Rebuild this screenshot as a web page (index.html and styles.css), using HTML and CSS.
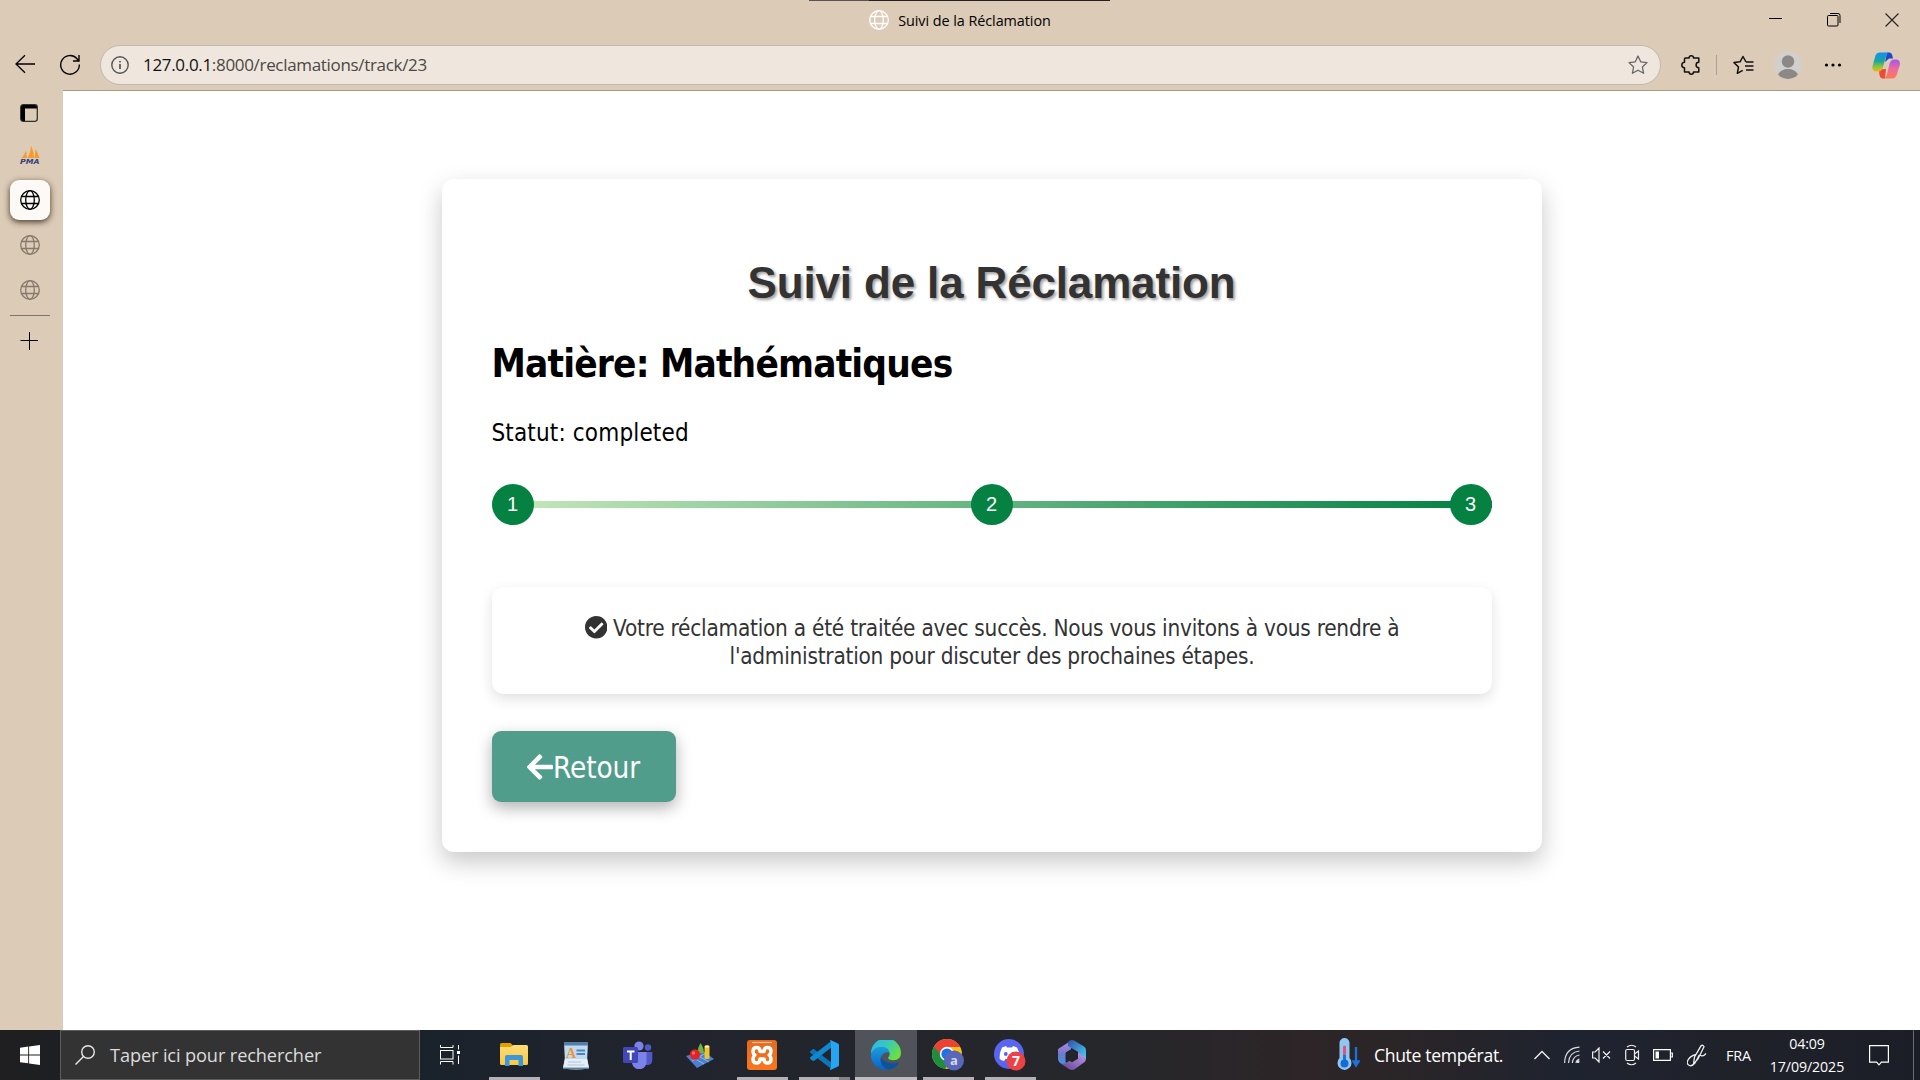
FILE: index.html
```html
<!DOCTYPE html>
<html lang="fr">
<head>
<meta charset="utf-8">
<title>Suivi de la Réclamation</title>
<link rel="stylesheet" href="styles.css">
</head>
<body>
<svg width="0" height="0" class="defs" aria-hidden="true">
  <defs>
    <symbol id="globe" viewBox="0 0 20 20"><g fill="none" stroke="currentColor" stroke-width="1.3"><circle cx="10" cy="10" r="9.3"/><ellipse cx="10" cy="10" rx="4.3" ry="9.3"/><path d="M1.4 6.5h17.2M1.4 13.5h17.2"/></g></symbol>
    <linearGradient id="edgeA" x1="0" y1="0" x2="1" y2=".6"><stop offset="0" stop-color="#2fb5e8"/><stop offset=".5" stop-color="#36c8c0"/><stop offset="1" stop-color="#6be03e"/></linearGradient>
    <linearGradient id="edgeB" x1="0" y1="0" x2="0" y2="1"><stop offset="0" stop-color="#1b9de0"/><stop offset="1" stop-color="#0b63c4"/></linearGradient>
    <linearGradient id="copA" x1="0" y1="0" x2="0" y2="1"><stop offset="0" stop-color="#1290f0"/><stop offset=".45" stop-color="#1aa5a0"/><stop offset=".75" stop-color="#8cc63a"/><stop offset="1" stop-color="#f4b51c"/></linearGradient>
    <linearGradient id="copB" x1="0" y1="0" x2="0" y2="1"><stop offset="0" stop-color="#a455ee"/><stop offset=".5" stop-color="#f06a9c"/><stop offset="1" stop-color="#fa7a50"/></linearGradient>
    <linearGradient id="mA" x1="0" y1="0" x2="1" y2="1"><stop offset="0" stop-color="#3350a8"/><stop offset="1" stop-color="#48d0f5"/></linearGradient>
    <linearGradient id="mB" x1="0" y1="0" x2="0" y2="1"><stop offset="0" stop-color="#b78ae0"/><stop offset=".5" stop-color="#6f78d0"/><stop offset="1" stop-color="#2aa4e8"/></linearGradient>
    <linearGradient id="mC" x1="0" y1="1" x2="1" y2="0"><stop offset="0" stop-color="#5c3f8c"/><stop offset="1" stop-color="#c59af0"/></linearGradient>
    <linearGradient id="xa" x1="0" y1="0" x2="0" y2="1"><stop offset="0" stop-color="#e36a20"/><stop offset="1" stop-color="#f9761d"/></linearGradient>
    <linearGradient id="fold" x1="0" y1="0" x2="0" y2="1"><stop offset="0" stop-color="#ffdc78"/><stop offset="1" stop-color="#fbc83f"/></linearGradient>
  </defs>
</svg>

<header class="titlebar">
  <span class="top-strip"></span>
  <div class="tab-title"><svg class="i20"><use href="#globe"/></svg><span>Suivi de la Réclamation</span></div>
  <div class="win-controls">
    <svg width="14" height="14" viewBox="0 0 14 14"><path d="M0 5.5h13" stroke="#000"/></svg>
    <svg width="14" height="14" viewBox="0 0 14 14" fill="none" stroke="#000"><rect x=".5" y="2.500" width="10.500" height="10.500" rx="1"/><path d="M3 .5h8a2 2 0 0 1 2 2V10"/></svg>
    <svg width="14" height="14" viewBox="0 0 14 14"><path d="M.5.5l13 13M13.500.5l-13 13" stroke="#222" stroke-width="1.100"/></svg>
  </div>
</header>

<nav class="toolbar">
  <svg class="back" width="20" height="20" viewBox="0 0 20 20" fill="none" stroke="#000" stroke-width="1.300"><path d="M20 10H1M10 1.200L1 10l9 8.800"/></svg>
  <svg class="reload" width="22" height="22" viewBox="0 0 22 22" fill="none" stroke="#000" stroke-width="1.400"><path d="M20.300 10.500A9.300 9.300 0 1 1 17.800 4.500L19.500 6.500M20 1v6h-6"/></svg>
  <div class="address">
    <svg class="info" width="18" height="18" viewBox="0 0 18 18" fill="none" stroke="#555" stroke-width="1.400"><circle cx="9" cy="9" r="8.200"/><path d="M9 8v5M9 5v1.600" stroke-width="1.700"/></svg>
    <span class="url"><b>127.0.0.1</b>:8000/reclamations/track/23</span>
    <svg class="star" width="20" height="20" viewBox="0 0 20 20" fill="none" stroke="#666" stroke-width="1.300" stroke-linejoin="round"><path d="M10 1l2.700 5.800 6.300.8-4.600 4.400 1.200 6.300L10 15.200l-5.600 3.100L5.600 12 1 7.600l6.300-.8z"/></svg>
  </div>
  <div class="tools">
    <svg class="puzzle" width="20" height="20" viewBox="0 0 20 20" fill="none" stroke="#111" stroke-width="1.500" stroke-linejoin="round"><path d="M4.500 3h3.600a2.200 2.200 0 0 1 4.400 0h5.300v4.300a2.400 2.400 0 0 0 0 5.400V17h-5.300a2.200 2.200 0 0 1-4.400 0H3.500v-4.300a2.500 2.500 0 0 1 0-5.400V4q0-1 1-1z"/></svg>
    <span class="sep"></span>
    <svg class="favs" width="21" height="20" viewBox="0 0 21 20" fill="none" stroke="#111" stroke-width="1.500" stroke-linejoin="round"><path d="M13 7L10 1.500 7 6.800 1 7.600l4.500 4.400-1.200 6.300 5.400-3M13 7h7.500M12 11h8.500M13 15h7.500"/></svg>
    <svg class="avatar" width="28" height="28" viewBox="0 0 28 28"><circle cx="14" cy="14" r="13.800" fill="#d2d0cd"/><circle cx="14" cy="10.500" r="6.200" fill="#8b8885"/><path d="M4 23.500q3-5.500 10-5.500t10 5.500a13.500 13.500 0 0 1-20 0z" fill="#8b8885"/></svg>
    <svg class="more" width="18" height="6" viewBox="0 0 18 6"><circle cx="2.500" cy="3" r="1.600"/><circle cx="9" cy="3" r="1.600"/><circle cx="15.500" cy="3" r="1.600"/></svg>
    <svg class="copilot" width="28" height="27" viewBox="0 0 28 27"><path d="M15 .5h2.500q2 .2 2.700 2.500L21 6.500h-4L13 10z" fill="#1f49c8"/><path d="M7.500.5H17q-2 .7-3 4L11 15q-1.300 4.500-5 4.500H3.500Q-.2 19 .5 14L3.500 3.500Q4.500.7 7.500.5z" fill="url(#copA)"/><path d="M13 26.500h-2.500Q8.200 26 7.600 23.500L7 19.500q2-.3 3.500-2.500L14 17z" fill="#ee4a38"/><path d="M20.500 26.500H12q2-.7 3-4L17.500 12q1.300-4.500 4.500-4.500h2.500q4 .5 3.300 5.500L24.500 23.500q-1 2.800-4 3z" fill="url(#copB)"/></svg>
  </div>
</nav>

<main class="workspace">
  <aside class="side">
    <div class="side-item"><svg width="18" height="18" viewBox="0 0 18 18"><rect x=".7" y=".7" width="16.600" height="16.600" rx="2.500" fill="none" stroke="#333" stroke-width="1.300"/><path d="M1 3.200q0-2.200 2.200-2.200h11.600Q17 1 17 3.200V4.500H5v12.500H3.200Q1 17 1 14.800z"/></svg></div>
    <div class="side-item pma"><svg width="22" height="20" viewBox="0 0 22 20"><path d="M2.500 13Q5.500 10 7 5.500L8 13zM8.500 13Q11.500 8 12 .5q3 6 3 12.500zM15.500 13q1-4 .8-9 3 4 4.200 9z" fill="#f79a2c"/><text x="1" y="19" textLength="19.500" lengthAdjust="spacingAndGlyphs" class="pma-text">PMA</text></svg></div>
    <div class="side-item"><span class="active-tab"><svg class="i20"><use href="#globe"/></svg></span></div>
    <div class="side-item dim"><svg class="i20"><use href="#globe"/></svg></div>
    <div class="side-item dim"><svg class="i20"><use href="#globe"/></svg></div>
    <hr class="side-line">
    <div class="side-item plus"><svg width="18" height="18" viewBox="0 0 18 18"><path d="M9.500 0v18M.5 8.500h18" stroke="#000"/></svg></div>
  </aside>

  <section class="page">
    <article class="card">
      <h1>Suivi de la Réclamation</h1>
      <h2>Matière: Mathématiques</h2>
      <p class="status">Statut: completed</p>
      <div class="steps"><span class="step">1</span><span class="step">2</span><span class="step">3</span></div>
      <div class="message"><svg class="check" viewBox="8 8 496 496"><path fill="currentColor" d="M504 256c0 136.967-111.033 248-248 248S8 392.967 8 256 119.033 8 256 8s248 111.033 248 248zM227.314 387.314l184-184c6.248-6.248 6.248-16.379 0-22.627l-22.627-22.627c-6.248-6.249-16.379-6.249-22.628 0L216 308.118l-70.059-70.059c-6.248-6.248-16.379-6.248-22.628 0l-22.627 22.627c-6.248 6.248-6.248 16.379 0 22.627l104 104c6.249 6.249 16.379 6.249 22.628.001z"/></svg> Votre réclamation a été traitée avec succès. Nous vous invitons à vous rendre à <br>l'administration pour discuter des prochaines étapes.</div>
      <a class="button"><svg width="26" height="30" viewBox="0 0 448 512"><path fill="#fff" d="M257.500 445.100l-22.200 22.200c-9.400 9.400-24.600 9.400-33.900 0L7 273c-9.400-9.400-9.400-24.600 0-33.900L201.400 44.700c9.400-9.400 24.600-9.400 33.900 0l22.200 22.200c9.500 9.500 9.300 25-.4 34.300L136.600 216H424c13.300 0 24 10.700 24 24v32c0 13.300-10.700 24-24 24H136.600l120.500 114.800c9.800 9.300 10 24.800.4 34.300z"/></svg><span>Retour</span></a>
    </article>
  </section>
</main>

<footer class="taskbar">
  <div class="start"><svg width="20" height="20" viewBox="0 0 20 20" fill="#fff"><path d="M0 2.700L8.200 1.600V9.400H0zM9.100 1.500L20 0v9.400H9.100zM0 10.400h8.200v7.900L0 17.200zM9.100 10.400H20V20L9.100 18.500z"/></svg></div>
  <div class="search"><svg width="20" height="20" viewBox="0 0 20 20" fill="none" stroke="#e8e8e8" stroke-width="1.400"><circle cx="13" cy="7" r="6.300"/><path d="M8.500 11.500L.5 19.500"/></svg><span>Taper ici pour rechercher</span></div>
  <div class="task-view"><svg width="20" height="20" viewBox="0 0 20 20" fill="none" stroke="#fff"><rect x=".5" y="5.500" width="12.500" height="8.500"/><path d="M.5 0v2.500H13V0M.5 19.500V16.500H13v3M18.500 0v4.500M18.500 10.500v8.500"/><path d="M17 7.500h3" stroke-width="3"/></svg></div>
  <div class="apps">
    <div class="app open"><svg width="28" height="24" viewBox="0 0 28 24"><path d="M0 1.500Q0 0 1.500 0h9L13 2.500V8H0z" fill="#e0a000"/><path d="M0 4h10.500l3-2H26.500Q28 2 28 3.500v17Q28 22 26.500 22h-25Q0 22 0 20.500z" fill="url(#fold)"/><path d="M5 14q0-2 2-2h14q2 0 2 2v9h-4.500v-6H9.500v6H5z" fill="#3a96dd"/></svg></div>
    <div class="app"><svg width="26" height="29" viewBox="0 0 26 29"><path d="M1 2h24l-.8 15L26 27H0l1.800-10z" fill="#bfdcef"/><path d="M1 1h24v3.500H1z" fill="#567fa5"/><path d="M2 18h22l2 9.500q-13 2-26 0z" fill="#e5eff7"/><text x="3" y="17" class="wordpad-a">A</text><path d="M13.500 9.500H22M13.500 13H22" stroke="#4b85c8" stroke-width="1.800"/><path d="M5 21h13M4.500 24h17" stroke="#b3c5d3"/><path d="M0 27.300h26" stroke="#5a829f" stroke-width="1.500"/></svg></div>
    <div class="app"><svg width="30" height="28" viewBox="0 0 30 28"><circle cx="25" cy="6.500" r="3.200" fill="#5059c9"/><path d="M20 11h9.300v8q0 5-5 5H20z" fill="#5059c9"/><circle cx="16" cy="5" r="4.600" fill="#7b83eb"/><path d="M9 11h14.500v9a7.300 7.300 0 0 1-14.500 2z" fill="#7b83eb"/><rect y="6" width="15" height="16" rx="1.500" fill="#4148b5"/><path d="M4 10.500h7.500M7.700 10.500V19" stroke="#fff" stroke-width="2"/></svg></div>
    <div class="app"><svg width="28" height="26" viewBox="0 0 28 26"><path d="M0 14L17 9l11 8-17 9z" fill="#4c80ce"/><path d="M4 14l14 8M9 12l14 8M6 19l14-8" stroke="#9dc3f0" stroke-width=".8"/><path d="M14.500 1q4 6 3 10h-6q0-5 3-10z" fill="#6cb840"/><circle cx="9" cy="12.500" r="5.200" fill="#de2626"/><circle cx="7.500" cy="11" r="1.700" fill="#f46a60"/><rect x="18.500" y="4" width="5" height="13" rx="1.500" fill="#edc32f"/><ellipse cx="21" cy="4.500" rx="2.500" ry="1.200" fill="#fff09c"/></svg></div>
    <div class="app open"><svg width="30" height="30" viewBox="0 0 30 30"><rect width="30" height="30" rx="3" fill="url(#xa)"/><path d="M5 2.500h20" stroke="#ffc392" stroke-width="1.200"/><path d="M15 11.500h-2Q13 7.500 9.500 7.500T6 11.500q0 2.500 1.800 3.500Q6 16.500 6 19q0 4 3.500 4t3.500-4h4q0 4 3.500 4t3.500-4q0-2.500-1.800-4 1.800-1 1.800-3.500 0-4-3.500-4T17 11.500z" fill="none" stroke="#fff" stroke-width="3.500" stroke-linejoin="round"/></svg></div>
    <div class="app open vscode"><svg width="30" height="30" viewBox="0 0 30 30"><path d="M1 11.500L3.500 9.300q1-.6 2 .2L23 23v6.500L1 12.500z" fill="#0c74b8"/><path d="M1 18.500l2.500 2.200q1 .6 2-.2L23 7V.5L1 17.500z" fill="#1187ce"/><path d="M22 .3L29 3.400q1 .5 1 1.600v20q0 1.200-1 1.600l-7 3.100q-1 .2-1.200-.5l1.200-1.700V2.200L20.800.6z" fill="#27a4f2"/></svg></div>
    <div class="app open active"><svg width="30" height="30" viewBox="0 0 30 30"><path d="M0 13.500A15 15 0 0 1 30 13q0 7-7.500 7.200Q18 20.300 17 18q2-2 1.500-5Q17 8 11 8 4 8 0 13.500z" fill="url(#edgeA)"/><path d="M0 14Q3 6.500 10.500 6.700 18 7 18.700 13q-1.500-1-4-.5Q10 14 9.500 19.500 9.500 26 17 29.900 7 31 2 22.500-.5 18 0 14z" fill="url(#edgeB)"/><path d="M10 17Q8 26 17 29.800q7-.8 10.800-6.800.3-1.200-1-.8-5.800 2.500-11.500-.2Q11.500 20 10 17z" fill="#0c539e"/></svg></div>
    <div class="app open"><svg width="32" height="32" viewBox="0 0 32 32"><circle cx="15" cy="15" r="15" fill="#fbc116"/><path d="M15 15L2 7.500A15 15 0 0 0 13 29.900L20 19z" fill="#1e8e3e"/><path d="M2 7.500A15 15 0 0 1 28.200 8H15L9 16z" fill="#ea4335"/><circle cx="15" cy="15" r="7.200" fill="#fff"/><circle cx="15" cy="15" r="5.600" fill="#1a73e8"/><circle cx="22" cy="21.500" r="10" fill="#5867b8"/><text x="22" y="26" text-anchor="middle" class="badge-a">a</text></svg></div>
    <div class="app open"><svg width="32" height="32" viewBox="0 0 32 32"><circle cx="15" cy="15" r="15" fill="#5865f2"/><path d="M8 8.500l4-1.500 1 1.500h5L19 7l4 1.500q3 5 2.800 11Q24 21.500 21 22l-1.500-2h-8L10 22q-3-.5-4.500-2.500Q5.500 13 8 8.500z" fill="#fff"/><circle cx="11.800" cy="15" r="1.900" fill="#5865f2"/><circle cx="19" cy="15" r="1.900" fill="#5865f2"/><circle cx="22" cy="22" r="9.500" fill="#ed4245"/><text x="22" y="27" text-anchor="middle" class="badge-7">7</text></svg></div>
    <div class="app"><svg width="28" height="30" viewBox="0 0 28 30"><path d="M0 9L13 .8v9L7.500 13v9L12 28 2 23Q0 21 0 19z" fill="url(#mB)"/><path d="M11 1q3-2 6 0l9 5.500q2 1 2 3.500v9l-7.500-5-.3-2L10 6V2z" fill="url(#mA)"/><path d="M28 18.500q0 3-2 4l-9 6.500q-3 1.800-6 0l-8.500-5.500q4 .8 7-1.500L20 16v-4z" fill="url(#mC)"/><path d="M14 8.800l6 3.500v6.400l-6 3.500-6-3.500v-6.400z" fill="#22252b"/></svg></div>
  </div>
  <div class="weather"><svg width="24" height="34" viewBox="0 0 24 34"><path d="M3.500 5a5 5 0 0 1 10 0v15a7 7 0 1 1-10 0z" fill="#8fc7f2"/><path d="M8.500 9v16" stroke="#dc5578" stroke-width="3" stroke-linecap="round"/><path d="M8.500 17v8" stroke="#1f70d8" stroke-width="3"/><circle cx="8.500" cy="25.500" r="4" fill="#146ad8"/><path d="M20 9v18M17.500 23.500L20 27.500 22.500 23.500z" fill="#1c72dc" stroke="#1c72dc" stroke-width="2.300"/></svg><span>Chute températ.</span></div>
  <div class="tray">
    <span class="t-chevron"><svg width="16" height="10" viewBox="0 0 16 10" fill="none" stroke="#eee" stroke-width="1.400"><path d="M.5 9L8 1.500 15.500 9"/></svg></span>
    <span class="t-wifi"><svg width="16" height="18" viewBox="0 0 16 18" fill="none" stroke="#ddd" stroke-width="1.200"><path d="M.6 17Q1 2 15.500 1.200M4.500 17Q5 6 15.500 5M8.300 17Q9 10 15.500 9M12 17q.3-3 3.500-4"/><circle cx="14" cy="15.500" r="1" fill="#fff"/></svg></span>
    <span class="t-sound"><svg width="19" height="16" viewBox="0 0 19 16" fill="none" stroke="#eee" stroke-width="1.200"><path d="M.6 5h2.600L7 1v14l-3.800-4H.6zM11 4.500l7 7M18 4.500l-7 7"/></svg></span>
    <span class="t-cam"><svg width="15" height="22" viewBox="0 0 15 22" fill="none" stroke="#eee" stroke-width="1.200"><rect x=".7" y="5.500" width="8.800" height="11" rx="1.500"/><path d="M9.500 10l4-3v8l-4-3M2 3q4.500-3.500 9 0M2 19q4.500 3.500 9 0"/></svg></span>
    <span class="t-battery"><svg width="20" height="12" viewBox="0 0 20 12"><path d="M.6.6h16.800v10.800H.6zM17.500 4H19.300v4h-1.800" fill="none" stroke="#fff" stroke-width="1.200"/><path d="M2.500 2.500H6v7H2.500z" fill="#fff"/></svg></span>
    <span class="t-pen"><svg width="20" height="23" viewBox="0 0 20 23" fill="none" stroke="#eee" stroke-width="1.300"><path d="M6.500 20L7.500 13 14 1.800q2-1.500 3 1L11 15 6.500 20zM9 10.500Q3 12 1 16T2.500 21.500Q5 22.500 8 19L11 13.500Q12 10 14 11.500t5-2"/></svg></span>
    <span class="t-lang">FRA</span>
    <time class="t-clock"><span>04:09</span><span class="date">17/09/2025</span></time>
    <span class="t-notify"><svg width="20" height="21" viewBox="0 0 20 21" fill="none" stroke="#fff" stroke-width="1.200"><path d="M.6.6h18.800v16.600h-7L10 19.800 7.600 17.200h-7z"/></svg></span>
  </div>
</footer>
</body>
</html>
```
FILE: styles.css
```css
* { box-sizing: border-box; }

body {
  margin: 0;
  width: 1920px;
  height: 1080px;
  overflow: hidden;
  display: flex;
  flex-direction: column;
  background: #dccbb6;
  font-family: "Open Sans", "Noto Sans", sans-serif;
  color: #000;
}

svg { display: block; flex: none; }
.defs { position: absolute; }
.i20 { width: 20px; height: 20px; }

/* Title bar */
.titlebar {
  position: relative;
  flex: none;
  height: 45px;
  display: grid;
  grid-template-columns: 1fr auto 1fr;
}
.top-strip {
  position: absolute;
  top: 0;
  left: 809px;
  width: 301px;
  height: 1px;
  background: linear-gradient(90deg, #555 60px, #222 60px);
}
.tab-title {
  grid-column: 2;
  display: flex;
  align-items: center;
  gap: 9px;
  height: 40px;
  font-size: 14.4px;
  letter-spacing: -0.06px;
}
.tab-title svg { color: #fff; }
.win-controls {
  display: flex;
  justify-content: flex-end;
  align-items: flex-start;
  gap: 44px;
  padding: 13px 21px 0 0;
}

/* Toolbar */
.toolbar {
  flex: none;
  height: 45px;
  display: flex;
  align-items: flex-start;
}
.back { margin: 9px 0 0 15px; }
.reload { margin: 9px 0 0 24px; }
.address {
  width: 1561px;
  height: 40px;
  margin-left: 19px;
  padding: 0 12px 0 10px;
  display: flex;
  align-items: center;
  background: #efe7de;
  border: 1px solid #bfb9b1;
  border-radius: 20px;
}
.url {
  flex: 1;
  margin: -2px 0 0 14px;
  font-size: 17px;
  letter-spacing: -0.32px;
  color: #4a4744;
}
.url b { font-weight: 400; color: #111; }
.tools { display: flex; align-items: center; height: 40px; }
.puzzle { margin-left: 20px; }
.sep { width: 1px; height: 20px; margin-left: 15px; background: #aa9f92; }
.favs { margin-left: 16px; }
.avatar { margin-left: 20px; }
.more { margin-left: 22px; }
.copilot { margin-left: 30px; }

/* Browser body */
.workspace { flex: none; height: 940px; display: flex; }
.side { width: 63px; display: flex; flex-direction: column; }
.side-item {
  width: 60px;
  height: 45px;
  display: flex;
  align-items: center;
  justify-content: center;
}
.side-item.pma { height: 42px; padding-bottom: 3px; }
.side-item:first-child { width: 58px; }
.side-item.plus { width: 58px; height: 50px; }
.pma-text { font: italic bold 7px "DejaVu Sans", sans-serif; fill: #34437c; }
.active-tab {
  width: 40px;
  height: 40px;
  display: flex;
  align-items: center;
  justify-content: center;
  background: #fcf9f6;
  border-radius: 9px;
  box-shadow: 0 2px 6px rgba(40, 28, 15, .85);
}
.dim { color: #857a6d; }
.side-line {
  width: 40px;
  height: 1px;
  margin: 3px 0 0 10px;
  border: 0;
  background: #7f7467;
}

/* Web page */
.page {
  flex: 1;
  border-top: 1px solid #ab9a87;
  background: #fff;
  padding-top: 88px;
}
.card {
  width: 1100px;
  height: 673px;
  margin: 0 auto;
  padding: 79px 50px 50px;
  background: #fff;
  border-radius: 12px;
  box-shadow: 0 10px 25px rgba(0, 0, 0, .22);
  font-family: "DejaVu Sans Condensed", "DejaVu Sans", sans-serif;
}
h1 {
  margin: 0;
  font: bold 44px/50px "Liberation Sans", Arial, sans-serif;
  letter-spacing: -0.16px;
  text-align: center;
  color: #333;
  text-shadow: 2px 2px 3px rgba(0, 0, 0, .38);
}
h2 {
  margin: 33px 0 0;
  font-size: 38.4px;
  line-height: 46px;
  letter-spacing: -0.82px;
}
.status { margin: 32px 0 0; font-size: 24px; line-height: 28px; letter-spacing: 0.15px; }
.steps {
  height: 41px;
  margin-top: 37px;
  display: flex;
  justify-content: space-between;
  background: linear-gradient(90deg, #c8e9be, #007f42) center / 100% 7px no-repeat;
}
.step {
  width: 42px;
  height: 41px;
  border-radius: 50%;
  background: #058142;
  color: #fff;
  font: 20px/41px "Liberation Sans", Arial, sans-serif;
  text-align: center;
}
.message {
  height: 107px;
  margin-top: 62px;
  padding: 27px 0 0 1px;
  border-radius: 12px;
  background: #fff;
  box-shadow: 0 5px 14px rgba(0, 0, 0, .12);
  text-align: center;
  font-size: 22.4px;
  line-height: 28px;
  letter-spacing: -0.24px;
  color: #333;
}
.check {
  display: inline-block;
  width: 22.4px;
  height: 22.4px;
  vertical-align: -2.5px;
}
.button {
  width: 184px;
  height: 71px;
  margin-top: 37px;
  display: flex;
  align-items: center;
  justify-content: center;
  border-radius: 9px;
  background: #519d8b;
  box-shadow: 0 6px 16px rgba(0, 0, 0, .3);
  color: #fff;
  font-size: 29.4px;
  letter-spacing: -0.1px;
}
.button span { padding-top: 3px; }

/* Taskbar */
.taskbar {
  flex: none;
  height: 50px;
  display: flex;
  color: #fff;
  background: linear-gradient(90deg, #1f1f21 0, #1a222c 22%, #21242d 34%, #25272b 57%, #2d2527 68%, #2a2527 73%, #1e2330 82%, #20222a 90%, #1b1e27 100%);
}
.start { width: 60px; display: flex; align-items: center; padding-left: 20px; }
.search {
  width: 360px;
  display: flex;
  align-items: center;
  gap: 15px;
  padding-left: 14px;
  border: 1px solid #5d5d5d;
  background: #333;
  color: #dcdcdc;
  font-size: 18.2px;
  letter-spacing: -0.12px;
}
.task-view { width: 63px; display: flex; align-items: center; padding-left: 20px; }
.apps { display: flex; }
.app {
  width: 62px;
  height: 50px;
  display: flex;
  align-items: center;
  justify-content: center;
}
.app.open { background: linear-gradient(#b5b0b5, #b5b0b5) 50% 100% / 51px 3px no-repeat; }
.app.vscode { background: linear-gradient(90deg, #b5b0b5 40px, #858287 40px) 50% 100% / 51px 3px no-repeat; }
.app.active { background: linear-gradient(#c0bcc0, #c0bcc0) 0 100% / 100% 3px no-repeat, #50535a; }
.wordpad-a { font: bold 14px "Liberation Serif", serif; fill: #f0923e; }
.badge-a { font: bold 13px "Open Sans", sans-serif; fill: #d4d8f2; }
.badge-7 { font: bold 14px "Open Sans", sans-serif; fill: #fff; }
.weather {
  width: 194px;
  margin-left: auto;
  display: flex;
  align-items: center;
  gap: 14px;
  font-size: 17.6px;
  letter-spacing: -0.35px;
}
.tray { width: 390px; display: flex; align-items: center; }
.tray > span { display: flex; align-items: center; flex: none; }
.tray .t-chevron { width: 31px; padding-left: 4px; }
.tray .t-wifi { width: 27px; padding-left: 3px; }
.tray .t-sound { width: 33px; padding-left: 4px; }
.tray .t-cam { width: 28px; padding-left: 4px; }
.tray .t-battery { width: 33px; padding-left: 4px; }
.tray .t-pen { width: 34px; padding-left: 5px; }
.tray .t-lang { width: 40px; padding-left: 10px; font-size: 14.4px; letter-spacing: -0.1px; }
.t-clock {
  width: 102px;
  flex: none;
  display: flex;
  flex-direction: column;
  align-items: center;
  font-size: 14.2px;
  line-height: 23px;
  letter-spacing: -0.1px;
}
.tray .t-notify {
  width: 56px;
  height: 50px;
  padding-left: 11px;
  border-right: 1px solid #666a72;
}
```
